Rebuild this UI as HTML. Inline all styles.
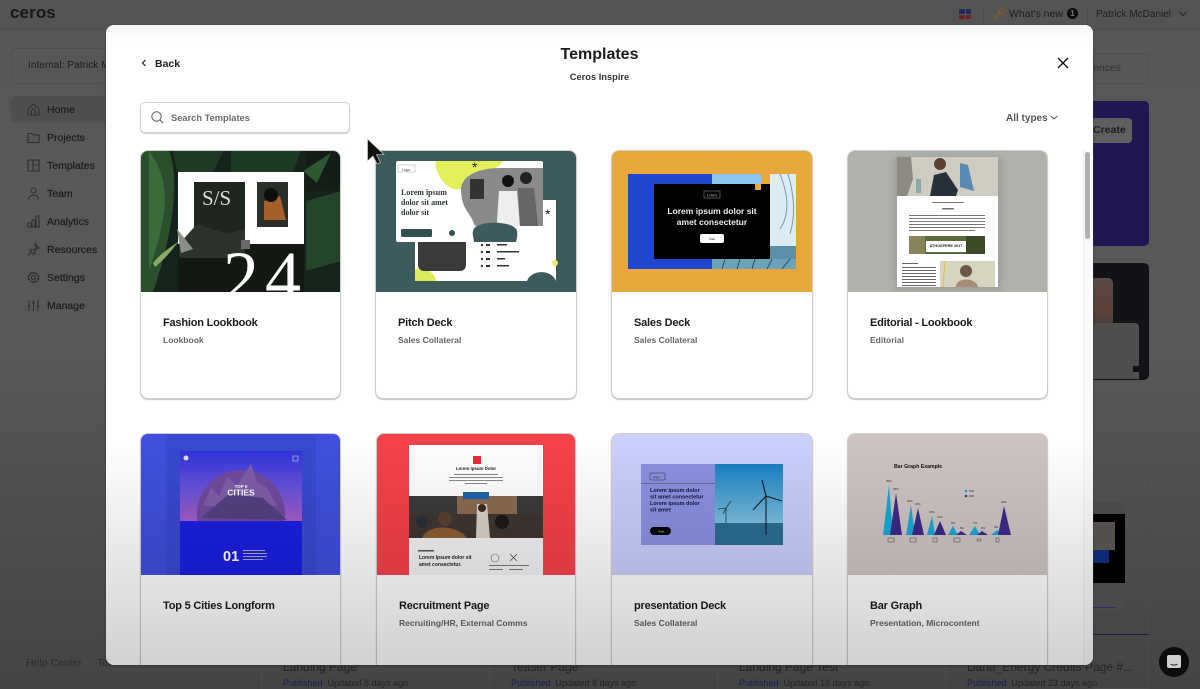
<!DOCTYPE html>
<html><head><meta charset="utf-8">
<style>
*{box-sizing:border-box;margin:0;padding:0}
html,body{width:1200px;height:689px;overflow:hidden;background:#555;font-family:"Liberation Sans",sans-serif}
.a{position:absolute;white-space:nowrap}
.nav{position:absolute;left:47px;font-size:10.5px;color:#1d1d1d;-webkit-text-stroke:.2px #1d1d1d}
.ni{position:absolute;left:27px;width:13px;height:13px;fill:none;stroke:#2d2d2d;stroke-width:1}
.card{position:absolute;height:249px;background:#fff;border:1px solid #cfcfcf;border-radius:8px;box-shadow:0 1px 1px #c4c4c4;overflow:hidden}
.card svg{position:absolute;left:0;top:0;display:block;filter:blur(.3px)}
.t{position:absolute;left:22px;top:166px;font-size:11px;font-weight:bold;color:#1b1b1b;white-space:nowrap;letter-spacing:-.2px}
.s{position:absolute;left:22px;top:184px;font-size:8.5px;font-weight:bold;color:#666;white-space:nowrap}
svg{font-family:"Liberation Sans",sans-serif}
</style></head><body>
<div class="a" style="left:0;top:0;width:1200px;height:689px;background:linear-gradient(#575757,#585858 50%,#444 100%)"></div>
<div class="a" style="left:0;top:0;width:1200px;height:30px;background:#545454;border-bottom:1px solid #4c4c4c"></div>
<div class="a" style="left:10px;top:3px;font-size:17px;font-weight:bold;color:#161616;letter-spacing:.1px">ceros</div>
<div class="a" style="left:959px;top:9px;width:6px;height:5px;background:#1d2a62;border-radius:1px"></div>
<div class="a" style="left:966px;top:9px;width:5px;height:5px;background:#1d2a62;border-radius:1px"></div>
<div class="a" style="left:959px;top:15px;width:6px;height:4px;background:#6d1f25;border-radius:1px"></div>
<div class="a" style="left:966px;top:15px;width:5px;height:4px;background:#6d1f25;border-radius:1px"></div>
<div class="a" style="left:983px;top:5px;width:1px;height:20px;background:#4d4d4d"></div>
<div class="a" style="left:1087px;top:5px;width:1px;height:20px;background:#4d4d4d"></div>
<svg class="a" style="left:992px;top:7px" width="14" height="14" viewBox="0 0 14 14"><path d="M2 12 L9 4 M6 3l5 5M10 1l1 2M12 4l2-1" stroke="#7a5a2a" stroke-width="2" fill="none"/></svg>
<div class="a" style="left:1009px;top:8px;font-size:10.5px;color:#1d1d1d">What's new</div>
<div class="a" style="left:1067px;top:8px;width:11px;height:11px;border-radius:50%;background:#0d0d0d;color:#777;font-size:8px;font-weight:bold;text-align:center;line-height:11px">1</div>
<div class="a" style="left:1096px;top:9px;font-size:10px;color:#1d1d1d">Patrick McDaniel</div>
<svg class="a" style="left:1178px;top:10px" width="10" height="8"><path d="M1.500 2l3.500 3.500L8.500 2" stroke="#222" stroke-width="1" fill="none"/></svg>

<div class="a" style="left:11px;top:48px;width:120px;height:36px;border:1px solid #4e4e4e;border-radius:5px"></div>
<div class="a" style="left:28px;top:60px;font-size:10px;color:#1d1d1d;letter-spacing:.05px">Internal: Patrick M</div>
<div class="a" style="left:11px;top:96px;width:110px;height:27px;background:#4f4f4f;border-radius:5px"></div>
<div class="nav" style="top:104px">Home</div><div class="nav" style="top:132px">Projects</div><div class="nav" style="top:160px">Templates</div><div class="nav" style="top:188px">Team</div><div class="nav" style="top:216px">Analytics</div><div class="nav" style="top:244px">Resources</div><div class="nav" style="top:272px">Settings</div><div class="nav" style="top:300px">Manage</div>
<svg class="ni" style="top:103px" viewBox="0 0 13 13"><path d="M1 6l5.500-5L12 6v6H1zM4.500 12V8a2 2 0 0 1 4 0v4"/></svg>
<svg class="ni" style="top:131px" viewBox="0 0 13 13"><path d="M1 2.500h4l1.500 1.500H12v7.500H1z"/></svg>
<svg class="ni" style="top:159px" viewBox="0 0 13 13"><path d="M1 1h11v11H1zM6 1v11M6 6h6"/></svg>
<svg class="ni" style="top:187px" viewBox="0 0 13 13"><circle cx="6.500" cy="3.500" r="2.500"/><path d="M1.500 12.500c0-6 10-6 10 0"/></svg>
<svg class="ni" style="top:215px" viewBox="0 0 13 13"><path d="M1 8h3v4H1zM5 5h3v7H5zM9 1h3v11H9z"/></svg>
<svg class="ni" style="top:243px" viewBox="0 0 13 13"><path d="M8 1l4 4-2 .5-2.500 3 .5 2-1 1-4-4 1-1 2 .5 3-2.500zM4 9l-3 3.500"/></svg>
<svg class="ni" style="top:271px" viewBox="0 0 13 13"><path d="M6.500 1l1 1.500 2-.5.500 2 2 1-1 1.500 1 1.500-2 1-.5 2-2-.5-1 1.500-1-1.500-2 .5-.5-2-2-1 1-1.500-1-1.500 2-1 .5-2 2 .5z"/><circle cx="6.500" cy="6.500" r="2"/></svg>
<svg class="ni" style="top:299px" viewBox="0 0 13 13"><path d="M2 1v11M6.500 1v11M11 1v11M.5 7h3M5 4h3M9.500 7h3"/></svg>
<div class="a" style="left:26px;top:657px;font-size:10.500px;color:#2b2b2b">Help Center</div>
<div class="a" style="left:97px;top:657px;font-size:10.500px;color:#2b2b2b">Terms</div>

<div class="a" style="left:1093px;top:53px;width:56px;height:31px;border:1px solid #4e4e4e;border-radius:0 5px 5px 0"></div>
<div class="a" style="left:1093px;top:62px;font-size:10.500px;color:#333">ences</div>
<div class="a" style="left:1093px;top:101px;width:56px;height:145px;background:#211651;border-radius:0 5px 5px 0"></div>
<div class="a" style="left:1093px;top:118px;width:39px;height:25px;background:#5f5f5f;border-radius:0 4px 4px 0"></div>
<div class="a" style="left:1093px;top:124px;font-size:10.500px;color:#1d1d1d;font-weight:bold">Create</div>
<div class="a" style="left:1093px;top:263px;width:56px;height:117px;background:#121316;border-radius:0 5px 5px 0"></div>
<div class="a" style="left:1093px;top:278px;width:20px;height:89px;background:linear-gradient(#5a4a44,#574038 40%,#2d3d44 75%,#2a2e32);border-radius:0 5px 5px 0"></div>
<div class="a" style="left:1093px;top:323px;width:46px;height:56px;background:#4e4e4e;border-radius:0 4px 0 0"></div>
<div class="a" style="left:1133px;top:366px;width:6px;height:6px;background:#111"></div>
<div class="a" style="left:1093px;top:479px;width:56px;height:210px;border:1px solid #4c4c4c;border-left:0;border-radius:0 5px 0 0"></div>
<div class="a" style="left:1093px;top:502px;width:32px;height:108px;background:#4b4b4b;border-radius:0 5px 5px 0"></div>
<div class="a" style="left:1093px;top:514px;width:32px;height:69px;background:#000"></div>
<div class="a" style="left:1093px;top:522px;width:22px;height:28px;background:#54504c"></div>
<div class="a" style="left:1093px;top:550px;width:16px;height:13px;background:#0c2a75"></div>
<div class="a" style="left:1093px;top:607px;width:22px;height:1px;background:#2a2a66"></div>
<div class="a" style="left:1093px;top:634px;width:56px;height:1px;background:#1c1c45"></div>
<div class="a" style="left:283px;top:660px;font-size:12px;color:#222">Landing Page</div>
<div class="a" style="left:511px;top:660px;font-size:12px;color:#222">Teaser Page</div>
<div class="a" style="left:739px;top:660px;font-size:12px;color:#222">Landing Page Test</div>
<div class="a" style="left:967px;top:660px;font-size:12px;color:#222">Dana_Energy Credits Page #...</div>
<div class="a" style="left:283px;top:678px;font-size:9px;color:#222"><span style="color:#1b1b55">Published</span>&nbsp; Updated 8 days ago</div>
<div class="a" style="left:511px;top:678px;font-size:9px;color:#222"><span style="color:#1b1b55">Published</span>&nbsp; Updated 8 days ago</div>
<div class="a" style="left:739px;top:678px;font-size:9px;color:#222"><span style="color:#1b1b55">Published</span>&nbsp; Updated 16 days ago</div>
<div class="a" style="left:967px;top:678px;font-size:9px;color:#222"><span style="color:#1b1b55">Published</span>&nbsp; Updated 23 days ago</div>
<div class="a" style="left:261px;top:665px;width:1px;height:24px;background:#4c4c4c"></div>
<div class="a" style="left:489px;top:665px;width:1px;height:24px;background:#4c4c4c"></div>
<div class="a" style="left:717px;top:665px;width:1px;height:24px;background:#4c4c4c"></div>
<div class="a" style="left:945px;top:665px;width:1px;height:24px;background:#4c4c4c"></div>
<div class="a" style="left:1159px;top:647px;width:30px;height:30px;border-radius:50%;background:#0c0c0c"></div>
<div class="a" style="left:1167px;top:655px;width:14px;height:13px;background:#cfcfcf;border-radius:2px"></div>
<svg class="a" style="left:1167px;top:655px" width="14" height="13"><path d="M3.500 9c2 1.500 5 1.500 7 0" stroke="#222" stroke-width="1" fill="none"/></svg>

<div class="a" style="left:106px;top:25px;width:987px;height:640px;background:#fff;border-radius:8px;overflow:hidden;box-shadow:0 1px 2px #333">
 <div class="a" style="left:0;top:0;width:987px;height:20px;background:linear-gradient(#f6f6f6,#fff)"></div>
 <svg class="a" style="left:33px;top:33px" width="10" height="10"><path d="M6.500 2L3.500 5l3 3" stroke="#222" stroke-width="1.200" fill="none"/></svg>
 <div class="a" style="left:49px;top:33px;font-size:10.500px;font-weight:bold;color:#222">Back</div>
 <div class="a" style="left:0;width:987px;text-align:center;top:21px;font-size:16px;font-weight:bold;color:#1b1b1b">Templates</div>
 <div class="a" style="left:0;width:987px;text-align:center;top:47px;font-size:9.300px;font-weight:bold;color:#333">Ceros Inspire</div>
 <svg class="a" style="left:950px;top:31px" width="14" height="14"><path d="M2 2l10 10M12 2L2 12" stroke="#111" stroke-width="1.300" fill="none"/></svg>
 <div class="a" style="left:34px;top:77px;width:210px;height:31px;border:1px solid #d2d2d2;border-radius:5px;box-shadow:0 1px 1px #ccc"></div>
 <svg class="a" style="left:44px;top:85px" width="14" height="14" fill="none" stroke="#555" stroke-width="1"><circle cx="6.500" cy="6.500" r="4.700"/><path d="M10 10l3 3"/></svg>
 <div class="a" style="left:65px;top:88px;font-size:9.300px;font-weight:bold;color:#6b6b6b">Search Templates</div>
 <div class="a" style="left:900px;top:88px;font-size:10px;font-weight:bold;color:#555">All types</div>
 <svg class="a" style="left:943px;top:89px" width="10" height="8"><path d="M1.500 2l3.500 3L8.500 2" stroke="#555" stroke-width="1" fill="none"/></svg>
 <div class="a" style="left:977px;top:125px;width:1px;height:515px;background:#eee"></div>
 <div class="a" style="left:978px;top:125px;width:9px;height:515px;background:#fafafa"></div>
 <div class="a" style="left:979px;top:127px;width:5px;height:87px;background:#b0b0b0;border-radius:3px"></div>
</div>

<!-- cards, clipped to the modal bottom -->
<div class="a" style="left:0;top:0;width:1200px;height:665px;overflow:hidden">
<div class="card" style="left:140px;top:150px;width:201px">
<svg width="200" height="141" viewBox="0 0 200 141"><rect width="200" height="141" fill="#15241a"/>
<path d="M0 0H28C40 30 30 90 12 141H0z" fill="#2b4f2c"/><path d="M8 0C30 30 28 60 8 120z" fill="#3d6a3a"/><path d="M32 0h50l-10 21H36z" fill="#203a24"/><path d="M90 0h70l-8 21H90z" fill="#1f3a22"/><path d="M165 50l35-10v70l-35 10z" fill="#24452a"/><path d="M165 0h35v40h-35z" fill="#131d16"/><path d="M162 20l28-18-14 30z" fill="#2c5730"/><path d="M12 112C22 100 32 95 38 90 30 100 24 108 14 116z" fill="#8aa868"/>
<rect x="37" y="21" width="126" height="72" fill="#fff"/><rect x="37" y="93" width="126" height="48" fill="#131813"/><rect x="53" y="31" width="51" height="76" fill="#1f261f"/><rect x="116" y="31" width="31" height="45" fill="#2b2f2a"/><path d="M123 50l16-5 6 24h-22z" fill="#a55f28"/><ellipse cx="130" cy="44" rx="7" ry="7" fill="#0e0e0e"/>
<text x="61" y="54" font-family="Liberation Serif" font-size="21" fill="#ddd">S/S</text>
<path d="M38 93l18-20 30 10 18-5v29H38z" fill="#2d332c"/><path d="M36 78l16 20-12 4z" fill="#8b918a"/>
<rect x="100" y="89" width="9" height="9" fill="#6a6a6a"/>
<text x="82" y="150" font-family="Liberation Serif" font-size="72" fill="#fff" letter-spacing="6">24</text></svg>
<div class="t">Fashion Lookbook</div><div class="s">Lookbook</div></div>

<div class="card" style="left:375px;top:150px;width:202px">
<svg width="200" height="141" viewBox="0 0 200 141"><rect width="200" height="141" fill="#3d5a5d"/>
<rect x="39" y="49" width="141" height="81" fill="#fff"/><path d="M39 130v-12c12-2 20 4 21 12z" fill="#dcea5a"/><circle cx="179" cy="112" r="3" fill="#e6ef6e"/><path d="M151 130a15 12 0 0 1 29 0z" fill="#3d5a5d"/>
<path d="M42 90h48v24a6 6 0 0 1-6 6H48a6 6 0 0 1-6-6z" fill="#3a3a3a"/>
<rect x="20" y="10" width="147" height="81" rx="2" fill="#fff"/><path d="M60 10h67c-6 10-30 16-40 27-14 8-30-16-27-27z" fill="#e3f05c"/>
<path d="M85 37c2-14 20-20 40-20h42v58h-68c-5-15-14-16-14-38z" fill="#8a8a8a"/><rect x="94" y="28" width="14" height="20" fill="#333"/><circle cx="132" cy="30" r="6" fill="#111"/><path d="M121 70l2-30h18l3 35h-22z" fill="#eee"/><circle cx="150" cy="27" r="6" fill="#222"/><path d="M142 37h16l4 38h-18z" fill="#666"/>
<path d="M97 80c1-11 42-11 44 0 1 5-1 11-1 11H98c0-3-2-7-1-11z" fill="#3d5a5d"/>
<rect x="22" y="14" width="17" height="7" fill="#fff" stroke="#aaa" stroke-width=".5"/><text x="26" y="20" font-size="3.500" fill="#333">Logo</text>
<text x="25" y="44" font-family="Liberation Serif" font-size="8" font-weight="bold" fill="#303a3a">Lorem ipsum</text><text x="25" y="54" font-family="Liberation Serif" font-size="8" font-weight="bold" fill="#303a3a">dolor sit amet</text><text x="25" y="64" font-family="Liberation Serif" font-size="8" font-weight="bold" fill="#303a3a">dolor sit</text>
<rect x="25" y="78" width="31" height="8" rx="1.500" fill="#2f5155"/><circle cx="76" cy="82" r="3" fill="#2f5155"/>
<text x="96" y="21" font-size="14" fill="#222">*</text><text x="169" y="68" font-size="14" fill="#222">*</text>
<g fill="#333"><circle cx="106" cy="94" r="1.200"/><circle cx="106" cy="101" r="1.200"/><circle cx="106" cy="108" r="1.200"/><circle cx="106" cy="115" r="1.200"/><rect x="110" y="93" width="4" height="2"/><rect x="110" y="100" width="4" height="2"/><rect x="110" y="107" width="4" height="2"/><rect x="110" y="114" width="4" height="2"/><rect x="121" y="93" width="10" height="1.500"/><rect x="121" y="100" width="22" height="1.500"/><rect x="121" y="107" width="8" height="1.500"/><rect x="121" y="114" width="12" height="1.500"/></g></svg>
<div class="t">Pitch Deck</div><div class="s">Sales Collateral</div></div>

<div class="card" style="left:611px;top:150px;width:202px">
<svg width="200" height="141" viewBox="0 0 200 141"><rect width="200" height="141" fill="#e6a83a"/>
<rect x="16" y="23" width="84" height="95" fill="#2146cf"/><rect x="100" y="23" width="49" height="10" fill="#8cc6ef"/>
<rect x="158" y="23" width="26" height="72" fill="#dcecf4"/><rect x="100" y="108" width="84" height="10" fill="#6da2bd"/><rect x="158" y="95" width="26" height="13" fill="#5c8fa8"/><path d="M110 118l3-10M125 118l3-10M140 118l3-10M155 118l5-10M170 118l8-10" stroke="#1c3a4a" stroke-width=".8"/><path d="M168 23c8 20 10 40 0 55M176 23c6 20 8 40 2 60" stroke="#7c9aa8" fill="none"/>
<rect x="42" y="33" width="116" height="75" fill="#000"/><rect x="143" y="33" width="6" height="6" fill="#e6a83a"/>
<rect x="92" y="40" width="16" height="7" fill="none" stroke="#999" stroke-width=".5"/><text x="95" y="45.500" font-size="3.500" fill="#ccc">LOGO</text>
<text x="100" y="63" text-anchor="middle" font-size="8.500" font-weight="bold" fill="#eee">Lorem ipsum dolor sit</text><text x="100" y="74" text-anchor="middle" font-size="8.500" font-weight="bold" fill="#eee">amet consectetur</text>
<rect x="88" y="83" width="24" height="9" rx="2" fill="#fff"/><text x="97" y="89" font-size="3" fill="#111">Start</text></svg>
<div class="t">Sales Deck</div><div class="s">Sales Collateral</div></div>

<div class="card" style="left:847px;top:150px;width:201px">
<svg width="200" height="141" viewBox="0 0 200 141"><defs><filter id="b"><feGaussianBlur stdDeviation="3"/></filter></defs><rect width="200" height="141" fill="#aeb0aa"/><rect x="47" y="6" width="106" height="133" fill="#8f918c" filter="url(#b)" opacity=".6"/>
<rect x="49" y="6" width="101" height="130" fill="#fff"/><rect x="49" y="6" width="101" height="39" fill="#cfccc2"/>
<path d="M49 6h14l2 22-6 17H49z" fill="#8e8a84"/><path d="M86 24l12-3 12 18-2 6H82z" fill="#25303a"/><circle cx="92" cy="13" r="6" fill="#5a4032"/><path d="M112 12l8 2 6 26-14-4z" fill="#5a8ab4"/><rect x="68" y="28" width="5" height="14" fill="#8aa"/>
<g fill="#777"><rect x="84" y="51" width="32" height="1"/><rect x="94" y="57" width="12" height="1.500"/>
<rect x="61" y="64" width="76" height="1"/><rect x="61" y="67" width="76" height="1"/><rect x="61" y="70" width="76" height="1"/><rect x="61" y="73" width="76" height="1"/><rect x="61" y="76" width="76" height="1"/><rect x="61" y="79" width="66" height="1"/></g>
<rect x="61" y="85" width="76" height="18" fill="#596a3c"/><rect x="118" y="85" width="19" height="18" fill="#3d4a2a"/><rect x="61" y="85" width="16" height="18" fill="#87835a"/><rect x="78" y="90" width="40" height="11" fill="#fff"/><text x="98" y="96" text-anchor="middle" font-size="3.800" font-weight="bold" fill="#222">ATHOSPERE 2017</text>
<g fill="#666"><rect x="54" y="112" width="16" height="1"/><rect x="54" y="116" width="34" height="1"/><rect x="54" y="119" width="34" height="1"/><rect x="54" y="122" width="34" height="1"/><rect x="54" y="125" width="34" height="1"/><rect x="54" y="128" width="34" height="1"/><rect x="54" y="131" width="34" height="1"/><rect x="54" y="134" width="34" height="1"/></g>
<rect x="92" y="110" width="55" height="26" fill="#d5d5c2"/><circle cx="118" cy="120" r="6" fill="#6b5648"/><path d="M108 136c0-10 20-10 22 0z" fill="#a88a76"/><path d="M95 136l2-26" stroke="#e0c040"/></svg>
<div class="t">Editorial - Lookbook</div><div class="s">Editorial</div></div>

<div class="card" style="left:140px;top:433px;width:201px">
<svg width="200" height="141" viewBox="0 0 200 141"><defs><linearGradient id="sky" x1="0" y1="0" x2="0" y2="1"><stop offset="0" stop-color="#2f33de"/><stop offset=".55" stop-color="#6a52d8"/><stop offset="1" stop-color="#a45cc8"/></linearGradient><clipPath id="cp"><rect x="39" y="17" width="122" height="70"/></clipPath></defs><rect width="200" height="141" fill="#3f4fdc"/><rect x="25" y="0" width="150" height="141" fill="#3342c0" opacity=".45"/>
<rect x="39" y="17" width="122" height="70" fill="url(#sky)"/><g clip-path="url(#cp)"><circle cx="100" cy="80" r="44" fill="#6f4a9d"/><path d="M62 72l8-18 8 8 8-20 10 10 14-22 6 18 10 6 10 18z" fill="#7d5ea8"/><path d="M60 84l28-24 34 4 24 22z" fill="#54407f"/></g>
<rect x="39" y="87" width="122" height="54" fill="#1b1fe0"/>
<text x="100" y="54" text-anchor="middle" font-size="4.500" font-weight="bold" fill="#fff">TOP 5</text><text x="100" y="61.500" text-anchor="middle" font-size="8.500" font-weight="bold" fill="#fff">CITIES</text>
<text x="82" y="127" font-size="14.500" font-weight="bold" fill="#fff">01</text><g fill="#aab"><rect x="102" y="116" width="22" height="1"/><rect x="102" y="119" width="24" height="1"/><rect x="102" y="122" width="24" height="1"/><rect x="102" y="125" width="20" height="1"/></g>
<circle cx="45" cy="24" r="2.500" fill="#ddd"/><rect x="152" y="22" width="5" height="5" fill="none" stroke="#ddd" stroke-width=".6"/></svg>
<div class="t">Top 5 Cities Longform</div></div>

<div class="card" style="left:376px;top:433px;width:200px">
<svg width="200" height="141" viewBox="0 0 200 141"><rect width="200" height="141" fill="#f4414a"/>
<rect x="32" y="11" width="134" height="130" fill="#fff"/><rect x="32" y="62" width="134" height="42" fill="#3c3a38"/><rect x="80" y="62" width="60" height="18" fill="#8a6a50"/><rect x="32" y="80" width="134" height="24" fill="#3f3530"/><circle cx="45" cy="88" r="6" fill="#2a3038"/><circle cx="68" cy="85" r="7" fill="#5a4030"/><circle cx="125" cy="88" r="7" fill="#1c1a18"/><path d="M100 70l10 0 3 34h-14z" fill="#d8cfc5"/><circle cx="105" cy="74" r="4" fill="#3a2a20"/><path d="M45 104c5-14 35-14 45 0z" fill="#8a5c34"/>
<rect x="86" y="58" width="26" height="7" fill="#1d63ad"/>
<rect x="96" y="22" width="8" height="8" fill="#e62c35"/>
<text x="99" y="36" text-anchor="middle" font-size="4.400" font-weight="bold" fill="#222">Lorem Ipsum Dolor</text><g fill="#888"><rect x="77" y="40" width="44" height="1"/><rect x="72" y="43" width="54" height="1"/><rect x="72" y="46" width="54" height="1"/><rect x="88" y="49" width="22" height="1"/></g>
<rect x="32" y="104" width="134" height="37" fill="#f2f2f2"/><rect x="41" y="116" width="16" height="1.500" fill="#555"/>
<text x="42" y="125" font-size="5" font-weight="bold" fill="#222">Lorem Ipsum dolor sit</text><text x="42" y="132" font-size="5" font-weight="bold" fill="#222">amet consectetur.</text>
<circle cx="118" cy="124" r="4" fill="none" stroke="#666" stroke-width=".6"/><path d="M133 120l7 7M140 120l-7 7" stroke="#555" stroke-width=".8"/><g fill="#777"><rect x="112" y="131" width="20" height="1"/><rect x="132" y="131" width="20" height="1"/><rect x="112" y="135" width="14" height="1"/><rect x="132" y="135" width="14" height="1"/></g></svg>
<div class="t">Recruitment Page</div><div class="s">Recruiting/HR, External Comms</div></div>

<div class="card" style="left:611px;top:433px;width:202px">
<svg width="200" height="141" viewBox="0 0 200 141"><defs><linearGradient id="sk2" x1="0" y1="0" x2="0" y2="1"><stop offset="0" stop-color="#1a7fc0"/><stop offset="1" stop-color="#7cc0e0"/></linearGradient></defs><rect width="200" height="141" fill="#c9cefa"/>
<rect x="29" y="30" width="74" height="81" fill="#8a90e0"/><rect x="103" y="30" width="68" height="59" fill="url(#sk2)"/><rect x="103" y="89" width="68" height="22" fill="#2b6d92"/>
<path d="M154 101V62M154 62l-4-16M154 62l16 5M154 62l-13 14" stroke="#141c22" stroke-width="1.100" fill="none"/><path d="M114 89V74M114 74l-3 6M114 74l5-7M114 74l-8 1" stroke="#26363f" stroke-width=".8" fill="none"/>
<rect x="38" y="39" width="15" height="7" rx="1" fill="none" stroke="#333" stroke-width=".5"/><text x="41" y="44" font-size="3" fill="#222">Logo</text><rect x="29" y="49" width="74" height=".6" fill="#555"/>
<g font-size="5.500" font-weight="bold" fill="#15153a"><text x="38" y="58">Lorem ipsum dolor</text><text x="38" y="64.500">sit amet consectetur</text><text x="38" y="71">Lorem ipsum dolor</text><text x="38" y="77.500">sit amet</text></g>
<rect x="38" y="93" width="21" height="8" rx="4" fill="#000"/><text x="46" y="98.500" font-size="3" fill="#ddd">Start</text></svg>
<div class="t">presentation Deck</div><div class="s">Sales Collateral</div></div>

<div class="card" style="left:847px;top:433px;width:201px">
<svg width="200" height="141" viewBox="0 0 200 141"><rect width="200" height="141" fill="#cdc4c2"/>
<text x="46" y="34" font-size="5.200" font-weight="bold" fill="#111">Bar Graph Example</text>
<g fill="#1aa7d8"><path d="M35 101l6-50 4 50zM58 101l5-30 4 30zM79 101l5-19 3 19zM100 101l5-9 5 9zM121 101l6-9 5 9zM143 101l6-5 5 5z"/></g>
<g fill="#3d2a88"><path d="M42 101l6-42 6 42zM64 101l6-27 6 27zM86 101l6-14 6 14zM108 101l5-4 6 4zM129 101l5-4 6 4zM150 101l6-29 7 29z"/></g>
<g font-size="2.800" fill="#222"><text x="38" y="48">45%</text><text x="45" y="56">35%</text><text x="59" y="68">26%</text><text x="67" y="71">24%</text><text x="81" y="79">15%</text><text x="89" y="84">12%</text><text x="103" y="90">8%</text><text x="112" y="95">5%</text><text x="125" y="90">7%</text><text x="133" y="95">3%</text><text x="146" y="94">4%</text><text x="153" y="69">24%</text></g>
<circle cx="118" cy="57" r="1.300" fill="#1aa7d8"/><circle cx="118" cy="62" r="1.300" fill="#3d2a88"/><rect x="121" y="56.500" width="5" height="1" fill="#555"/><rect x="121" y="61.500" width="5" height="1" fill="#555"/>
<g fill="none" stroke="#444" stroke-width=".5"><rect x="40" y="104" width="6" height="4"/><rect x="62" y="104" width="6" height="4"/><rect x="85" y="104" width="4" height="4"/><rect x="106" y="104" width="6" height="4"/><rect x="129" y="105" width="4" height="2"/><rect x="148" y="104" width="3" height="4"/></g></svg>
<div class="t">Bar Graph</div><div class="s">Presentation, Microcontent</div></div>
</div>

<div class="a" style="left:106px;top:440px;width:987px;height:225px;background:linear-gradient(rgba(0,0,0,0),rgba(0,0,0,.18));border-radius:0 0 8px 8px;pointer-events:none"></div>
<svg class="a" style="left:366px;top:138px" width="20" height="28" viewBox="0 0 20 28"><path d="M1.500 1v22l5.500-5 4 8 3.500-1.500-4-8h7.500z" fill="#111" stroke="#ddd" stroke-width=".6"/></svg>
</body></html>
